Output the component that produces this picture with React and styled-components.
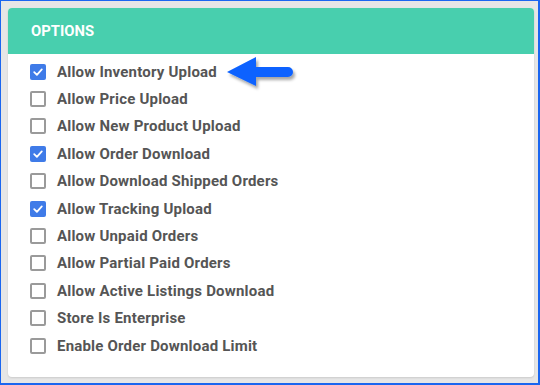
import styled, { createGlobalStyle } from 'styled-components'

const Global = createGlobalStyle`
    html, body {
        margin: 0;
        padding: 0;
    }
    body {
        font-family: Roboto, "Liberation Sans", sans-serif;
    }
`

const Frame = styled.div`
    box-sizing: border-box;
    width: 540px;
    height: 385px;
    background: #e6e6e6;
    border: 1px solid #1a66f0;
    border-right-width: 2px;
    border-bottom-width: 2px;
    padding: 7px 4px 6px 7px;
    display: flex;
`

const Card = styled.div`
    flex: 1;
    background: #fff;
    border-radius: 4px;
    box-shadow: 0 1px 2px rgba(0, 0, 0, 0.12);
    display: flex;
    flex-direction: column;
`

const Header = styled.div`
    height: 46px;
    box-sizing: border-box;
    background: #48cfae;
    border-radius: 4px 4px 0 0;
    display: flex;
    align-items: center;
    padding-left: 23px;
    color: #fff;
    font-size: 14.8px;
    font-weight: 700;
`

const List = styled.div`
    display: flex;
    flex-direction: column;
    padding: 4px 0 0 22px;
`

const Row = styled.label`
    position: relative;
    height: 27.4px;
    display: flex;
    align-items: center;
    gap: 11px;
    color: #555;
    font-size: 15px;
    font-weight: 700;
    letter-spacing: 0.2px;
`

const Box = styled.span`
    box-sizing: border-box;
    width: 16px;
    height: 16px;
    border-radius: 2px;
    border: ${p => (p.$checked ? 'none' : '2px solid #9a9a9a')};
    background: ${p => (p.$checked ? '#3f7be8' : '#fff')};
    display: flex;
    align-items: center;
    justify-content: center;
`

const Arrow = styled.svg`
    position: absolute;
    left: 197px;
    top: -1px;
    overflow: visible;
`

const options = [
    ['Allow Inventory Upload', true],
    ['Allow Price Upload', false],
    ['Allow New Product Upload', false],
    ['Allow Order Download', true],
    ['Allow Download Shipped Orders', false],
    ['Allow Tracking Upload', true],
    ['Allow Unpaid Orders', false],
    ['Allow Partial Paid Orders', false],
    ['Allow Active Listings Download', false],
    ['Store Is Enterprise', false],
    ['Enable Order Download Limit', false],
]

const Check = () => (
    <svg width="12" height="12" viewBox="0 0 12 12">
        <path d="M2.2 6.2 L4.9 8.8 L9.8 3.4" fill="none" stroke="#fff" strokeWidth="1.8" strokeLinecap="round" strokeLinejoin="round" />
    </svg>
)

const App = () => {
    return (
        <Frame>
            <Global />
            <Card>
                <Header>OPTIONS</Header>
                <List>
                    {options.map(([label, checked], i) => (
                        <Row key={label}>
                            <Box $checked={checked}>{checked && <Check />}</Box>
                            {label}
                            {i === 0 && (
                                <Arrow width="70" height="34" viewBox="0 0 70 34">
                                    <defs>
                                        <filter id="sh" x="-20%" y="-20%" width="150%" height="160%">
                                            <feDropShadow dx="2" dy="3" stdDeviation="1.6" floodColor="#000" floodOpacity="0.35" />
                                        </filter>
                                    </defs>
                                    <g filter="url(#sh)">
                                        <path d="M0 15 L29 0 L29 10 L61 10 A5 5 0 0 1 61 20 L29 20 L29 29 Z" fill="#0a62ff" />
                                    </g>
                                </Arrow>
                            )}
                        </Row>
                    ))}
                </List>
            </Card>
        </Frame>
    )
}

export default App
